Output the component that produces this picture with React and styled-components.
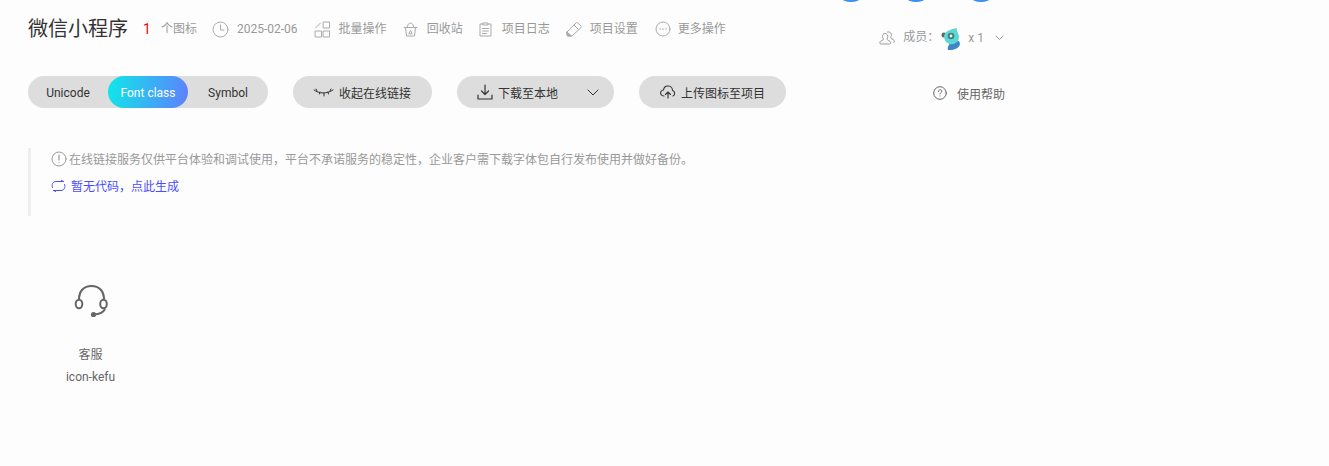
import React from "react";
import styled, { createGlobalStyle } from "styled-components";

const Global = createGlobalStyle`
  html, body { margin: 0; padding: 0; background: #fdfdfd; overflow: hidden; }
  body { font-family: Roboto, "Noto Sans CJK SC", sans-serif; }
`;
const Page = styled.div`
  position: relative;
  width: 1329px;
  height: 466px;
  padding-left: 28px;
  box-sizing: border-box;
  overflow: hidden;
`;
const Dots = styled.div`
  position: absolute;
  top: -34px;
  left: 833px;
  display: flex;
  gap: 29px;
`;
const Dot = styled.span`
  width: 36px;
  height: 36px;
  border-radius: 50%;
  background: #3d8ff0;
`;
const Header = styled.header`
  display: flex;
  align-items: center;
  width: 978px;
  height: 58px;
`;
const Title = styled.h1`
  margin: 0 15px 0 0;
  width: 100px;
  font-size: 20px;
  line-height: 28px;
  font-weight: 400;
  color: #333;
  white-space: nowrap;
`;
const Count = styled.span`
  width: 18px;
  color: #f00;
  font-size: 14px;
  font-weight: 400;
  line-height: 20px;
`;
const Meta = styled.span`
  display: flex;
  align-items: center;
  gap: ${p => p.$gap ?? 7}px;
  margin-right: ${p => p.$mr ?? 16}px;
  font-size: 12px;
  line-height: 17px;
  color: #999;
  white-space: nowrap;
  svg { color: #aaa; }
`;
const Members = styled.div`
  display: flex;
  align-items: center;
  margin-left: auto;
  margin-top: 18px;
  margin-right: 2px;
  font-size: 12px;
  color: #999;
  white-space: nowrap;
`;
const MemberLabel = styled.span`
  line-height: 17px;
  margin-top: -1px;
`;
const MemberCount = styled.span`
  line-height: 17px;
  margin-top: 1px;
`;
const Toolbar = styled.div`
  display: flex;
  align-items: center;
  width: 978px;
  height: 32px;
  margin-top: 18px;
`;
const Segment = styled.div`
  display: flex;
  width: 240px;
  height: 32px;
  border-radius: 16px;
  background: #ddd;
  margin-right: 25px;
`;
const SegItem = styled.span`
  width: 80px;
  height: 32px;
  border-radius: 16px;
  text-align: center;
  font-size: 12px;
  line-height: 34px;
  color: ${p => (p.$active ? "#fff" : "#333")};
  background: ${p => (p.$active ? "linear-gradient(100deg, #0fe8e8 0%, #5f7fff 100%)" : "transparent")};
`;
const Pill = styled.button`
  display: flex;
  align-items: center;
  box-sizing: border-box;
  width: ${p => p.$w}px;
  height: 32px;
  padding: 0 0 0 ${p => p.$pl}px;
  margin-right: 25px;
  border: 0;
  border-radius: 16px;
  background: #ddd;
  color: #333;
  font-family: inherit;
  font-size: 12px;
  gap: ${p => p.$gap ?? 4}px;
  white-space: nowrap;
`;
const Help = styled.div`
  display: flex;
  align-items: center;
  gap: 10px;
  margin-left: auto;
  margin-top: 2px;
  margin-right: 1px;
  font-size: 12px;
  color: #666;
  white-space: nowrap;
`;
const Notice = styled.section`
  box-sizing: border-box;
  width: 700px;
  height: 68px;
  margin-top: 40px;
  padding: 2px 0 0 20px;
  border-left: 3px solid #eee;
  font-size: 12px;
`;
const NoticeLine = styled.div`
  display: flex;
  align-items: center;
  gap: ${p => p.$gap}px;
  height: 17px;
  margin-bottom: 10px;
  color: ${p => p.$color};
  white-space: nowrap;
`;
const Card = styled.article`
  display: flex;
  flex-direction: column;
  align-items: center;
  width: 125px;
  margin-top: 68px;
`;
const CardName = styled.div`
  margin-top: 26px;
  font-size: 12px;
  line-height: 18px;
  color: #666;
`;
const CardCode = styled.div`
  margin-top: 4px;
  font-size: 12px;
  line-height: 18px;
  color: #666;
`;
const Chevron = styled.svg`
  margin-left: ${p => p.$ml}px;
`;

const S = { fill: "none", stroke: "currentColor", strokeWidth: 1, strokeLinecap: "round", strokeLinejoin: "round" };

const App = () => (
  <Page>
    <Global />
    <Dots><Dot /><Dot /><Dot /></Dots>
    <Header>
      <Title>微信小程序</Title>
      <Count>1</Count>
      <Meta $mr={15}>个图标</Meta>
      <Meta $gap={8} $mr={16}>
        <svg width="17" height="17" viewBox="0 0 17 17" {...S}><circle cx="8.5" cy="8.5" r="7.5" /><path d="M8.5 4v5h3.5" /></svg>
        <span>2025-02-06</span>
      </Meta>
      <Meta $gap={8}>
        <svg width="17" height="17" viewBox="0 0 17 17" {...S}><rect x="9.5" y="1" width="6" height="6" /><rect x="1.5" y="10" width="6" height="6" /><rect x="9.5" y="10" width="6" height="6" /><path d="M1.5 7l5-5" /></svg>
        批量操作
      </Meta>
      <Meta $gap={9} $mr={16}>
        <svg width="15" height="15" viewBox="0 0 15 15" {...S}><path d="M1 5.500h13M2.500 5.500l1 8.500h8l1-8.500M4 5.500l1-2.500c.5-2.500 4.500-2.500 5 0l1 2.500M6 11.500l1.500-3 1.500 3z" /></svg>
        回收站
      </Meta>
      <Meta $gap={10}>
        <svg width="13" height="15" viewBox="0 0 13 15" {...S}><path d="M4 2H1v12h11V2H9M4 1h5v2H4zM3.500 6.500h6M3.500 9h6M3.500 11.500h4" /></svg>
        项目日志
      </Meta>
      <Meta $gap={8} $mr={17}>
        <svg width="16" height="16" viewBox="0 0 16 16" {...S}><path d="M1 11L10 2c.600-.600 1.200-.600 1.800 0L15 5c.500.500.500 1 0 1.500L6 15H2.500C1.500 15 1 14.500 1 13.500zM8 4l4.500 4.500" /><path d="M1 11l4.500 4H2c-.700 0-1-.300-1-1z" fill="currentColor" /></svg>
        项目设置
      </Meta>
      <Meta>
        <svg width="16" height="16" viewBox="0 0 16 16" {...S}><circle cx="8" cy="8" r="7" /><path d="M5 8h.01M8 8h.01M11 8h.01" strokeWidth="1.500" /></svg>
        更多操作
      </Meta>
      <Members>
        <svg width="16" height="15" viewBox="0 0 16 15" {...S} style={{ marginRight: 8 }}><path d="M6 2.500c2.500 0 3.500 2.500 2.500 4.500-.7 1.200-.3 2 .8 2.500l1.700.8c1 .6 1 2.700-.5 2.700H2c-1.500 0-1.500-2.100-.5-2.700l1.700-.8c1.100-.5 1.500-1.300.8-2.500C3 5 3.500 2.500 6 2.500zM8.500 1c3-.8 4.700 2 3.500 4.500-.6 1.200-.3 2 .8 2.400l1.700.8c.8.500 1 1.800.5 2.800" /></svg>
        <MemberLabel>成员：</MemberLabel>
        <svg width="20" height="23" viewBox="0 0 20 23" style={{ margin: "0 7px 0 2px" }}>
          <circle cx="3" cy="8" r="2.500" fill="#56676b" />
          <path d="M7 23c-1-3 1-7 5-8 2-1 5-2 6.500 0 1.500 3-1 6-4 7-2.500 1-5 1.500-7.500 1z" fill="#3f86c9" />
          <path d="M3 9C4 4 10 2 16 1c-1 3 2 6 2 9 0 5-5 8-9 7-4-1-6-4-6-8z" fill="#5cd8d2" />
          <circle cx="10" cy="9" r="3.300" fill="#4d7a80" /><circle cx="10" cy="9" r="1.400" fill="#cfe" />
        </svg>
        <MemberCount>x 1</MemberCount>
        <Chevron $ml={11} width="9" height="6" viewBox="0 0 9 6" {...S}><path d="M1 1l3.500 3.500L8 1" /></Chevron>
      </Members>
    </Header>
    <Toolbar>
      <Segment>
        <SegItem>Unicode</SegItem>
        <SegItem $active>Font class</SegItem>
        <SegItem>Symbol</SegItem>
      </Segment>
      <Pill $w={139} $pl={20} $gap={5}>
        <svg width="21" height="9" viewBox="0 0 21 9" {...S}><path d="M1 2c5 4 13 4 19 0M3 1l1 2M7 4l-.5 2M11 5v3M15 4l.5 2M18 1l-1 2" /></svg>
        收起在线链接
      </Pill>
      <Pill $w={157} $pl={20} $gap={5}>
        <svg width="16" height="16" viewBox="0 0 16 16" {...S} strokeWidth="1.200"><path d="M8 1v9M4.500 7L8 10.500 11.500 7M1 11v4h14v-4" /></svg>
        下载至本地
        <Chevron $ml={24} width="12" height="7" viewBox="0 0 12 7" {...S}><path d="M1 1l5 5 5-5" /></Chevron>
      </Pill>
      <Pill $w={147} $pl={21} $gap={5}>
        <svg width="16" height="14" viewBox="0 0 16 14" {...S} strokeWidth="1.100"><path d="M4 11C1 11 0 8.500 1 6.500 2 5 3.500 5 3.500 5 4 2 6.500.8 8.500 1c2.500.2 4 2.500 4 4.500 2.500.5 3 4.500.5 5.500M8 13V7M5.500 9.500L8 7l2.500 2.500" /></svg>
        上传图标至项目
      </Pill>
      <Help>
        <svg width="14" height="14" viewBox="0 0 14 14" {...S}><circle cx="7" cy="7" r="6.300" /><path d="M5.300 5.500c0-2.300 3.500-2.300 3.500-.2 0 1.300-1.800 1.300-1.800 2.700M7 10h.01" /></svg>
        使用帮助
      </Help>
    </Toolbar>
    <Notice>
      <NoticeLine $gap={2} $color="#999">
        <svg width="16" height="16" viewBox="0 0 16 16" {...S}><circle cx="8" cy="8" r="7" /><path d="M8 4v5M8 11.500h.01" strokeWidth="1.200" /></svg>
        在线链接服务仅供平台体验和调试使用，平台不承诺服务的稳定性，企业客户需下载字体包自行发布使用并做好备份。
      </NoticeLine>
      <NoticeLine $gap={5} $color="#4c4cff">
        <svg width="15" height="12" viewBox="0 0 15 12" {...S}><path d="M1.500 7.500C.200 4.500 2 1.500 5 1.500h7.500M10.500 .500l2 1M13.500 4.500c1.300 3-.5 6-3.500 6H2.500M4.500 11.500l-2-1" /></svg>
        暂无代码，点此生成
      </NoticeLine>
    </Notice>
    <Card>
      <svg width="36" height="36" viewBox="0 0 36 36" fill="none" stroke="#666">
        <path d="M6 15.500C6 7 11 2 18.500 2S31 7 31 15.500" strokeWidth="2.200" />
        <ellipse cx="6" cy="20" rx="3.300" ry="4.300" strokeWidth="2" />
        <ellipse cx="30.500" cy="20" rx="3.300" ry="4.300" strokeWidth="2" />
        <path d="M32 25c-1.500 3-5 5-11 5.500" strokeWidth="2" />
        <circle cx="20.500" cy="30.500" r="2.600" fill="#666" stroke="none" />
      </svg>
      <CardName>客服</CardName>
      <CardCode>icon-kefu</CardCode>
    </Card>
  </Page>
);

export default App;
